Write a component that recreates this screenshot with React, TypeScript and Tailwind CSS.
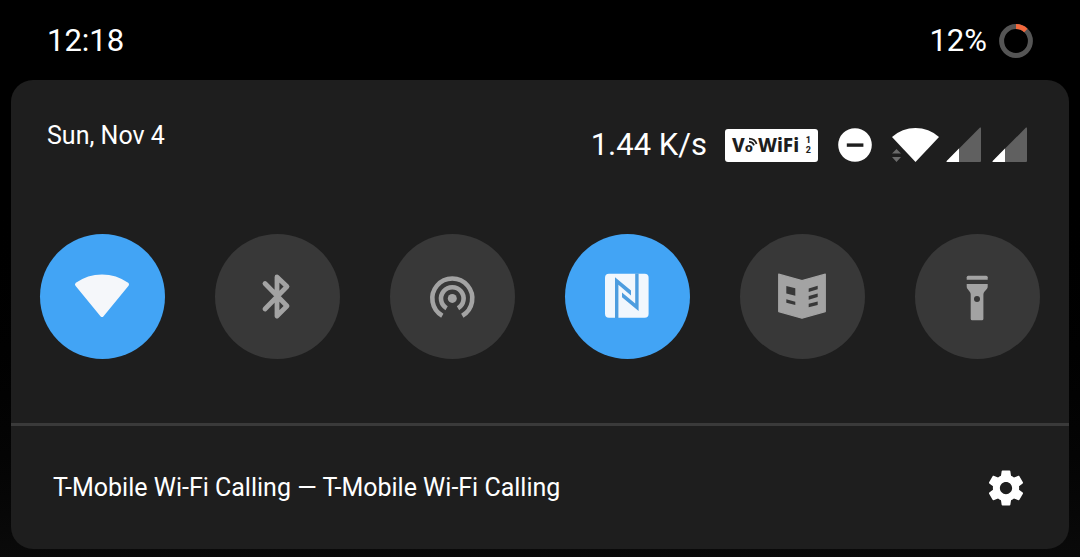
import type { ReactNode } from 'react';

const OFF = '#a3a3a3';
const CUTOUT = '#383838';

function WifiTile() {
  return (
    <svg viewBox="0 0 65 65" className="size-[65px]" aria-hidden>
      <path
        d="M7 20.5A43 43 0 0 1 57 20.5L32 51Z"
        fill="#f5f7fa"
        stroke="#f5f7fa"
        strokeWidth="4"
        strokeLinejoin="round"
      />
    </svg>
  );
}

function BluetoothTile() {
  return (
    <svg viewBox="0 0 65 65" className="size-[65px]" aria-hidden>
      <path
        d="M20 19.5L42 42L32 52V13L42 22.5L20 45"
        fill="none"
        stroke={OFF}
        strokeWidth="4.8"
        strokeLinecap="round"
        strokeLinejoin="round"
      />
    </svg>
  );
}

function HotspotTile() {
  return (
    <svg viewBox="0 0 65 65" className="size-[65px]" aria-hidden>
      <circle cx="32.3" cy="34.4" r="4.5" fill={OFF} />
      <g fill="none" stroke={OFF} strokeWidth="4.6">
        <path d="M22.3 51.8A20 20 0 1 1 42.3 51.8" />
        <path d="M26.6 44.3A11.3 11.3 0 1 1 38 44.3" />
      </g>
    </svg>
  );
}

function NfcTile() {
  return (
    <svg viewBox="0 0 65 65" className="size-[65px]" aria-hidden>
      <rect x="10" y="9.8" width="43.6" height="44" rx="4" fill="#f1f7fd" />
      <path
        d="M20 54V13.2L36 26.6V31.4L23.4 20.8V54ZM43.6 9.6V47L27 33.2V28.4L40.2 39.6V9.6Z"
        fill="#4d9ddf"
      />
    </svg>
  );
}

function ReadingTile() {
  return (
    <svg viewBox="0 0 65 65" className="size-[65px]" aria-hidden>
      <path
        d="M8.7 10.2L32 16.6L55.3 10.2V47.6L32 54.2L8.7 47.6Z"
        fill={OFF}
        stroke={OFF}
        strokeWidth="1.2"
        strokeLinejoin="round"
      />
      <g fill={CUTOUT}>
        <path d="M16.3 22L25.3 24.2V31.7L16.3 29.5Z" />
        <path d="M16.3 35.3L25.3 37.7V41L16.3 38.7Z" />
        <path d="M38.7 24.4L47.7 21.7V25.2L38.7 28Z" />
        <path d="M38.7 32.1L47.7 29.4V32.9L38.7 35.7Z" />
        <path d="M38.7 39.8L47.7 37.5V41L38.7 43.3Z" />
      </g>
    </svg>
  );
}

function FlashlightTile() {
  return (
    <svg viewBox="0 0 65 65" className="size-[65px]" aria-hidden>
      <path d="M21.7 15.7V13.2Q21.7 11.7 23.2 11.7H41.2Q42.7 11.7 42.7 13.2V15.7Z" fill={OFF} />
      <path
        d="M21.7 20H42.7V22.5Q42.7 24 41.8 25L39.4 27.8Q38.4 29 38.4 30.5V54.8Q38.4 56.3 36.9 56.3H27.2Q25.7 56.3 25.7 54.8V30.5Q25.7 29 24.7 27.8L22.6 25Q21.7 24 21.7 22.5Z"
        fill={OFF}
      />
      <circle cx="32" cy="35" r="3" fill={CUTOUT} />
    </svg>
  );
}

const tiles: { label: string; on: boolean; icon: ReactNode }[] = [
  { label: 'Wi-Fi', on: true, icon: <WifiTile /> },
  { label: 'Bluetooth', on: false, icon: <BluetoothTile /> },
  { label: 'Hotspot', on: false, icon: <HotspotTile /> },
  { label: 'NFC', on: true, icon: <NfcTile /> },
  { label: 'Reading mode', on: false, icon: <ReadingTile /> },
  { label: 'Flashlight', on: false, icon: <FlashlightTile /> },
];

function BatteryRing() {
  // pathLength 100, so the dash is the charge in percent
  return (
    <svg viewBox="0 0 34 34" className="size-[34px]" aria-hidden>
      <g fill="none" strokeWidth="5">
        <circle cx="17" cy="17" r="14.4" stroke="#555555" />
        <circle
          cx="17"
          cy="17"
          r="14.4"
          stroke="#f2683c"
          pathLength="100"
          strokeDasharray="12 88"
          transform="rotate(-90 17 17)"
        />
      </g>
    </svg>
  );
}

function VoWifiBadge() {
  return (
    <div className="flex h-[33px] w-[93px] items-center justify-between rounded-[3px] bg-white px-[7px] font-extrabold text-[#1e1e1e]">
      <div className="flex items-center font-['Noto_Sans','Open_Sans',sans-serif] text-[19px] leading-none">
        <span>V</span>
        <span className="self-end text-[13px] leading-4">o</span>
        <svg viewBox="0 0 9 16" className="-ml-1 h-4 w-[9px]" aria-hidden>
          <g fill="none" stroke="#1e1e1e" strokeWidth="1.8">
            <path d="M0 1.6Q6 1.6 7.6 7" />
            <path d="M0 4.8Q3.8 4.8 5 8.4" />
          </g>
        </svg>
        <span>WiFi</span>
      </div>
      <div className="flex flex-col font-[Roboto,sans-serif] text-[9px] leading-[10px]">
        <span>1</span>
        <span>2</span>
      </div>
    </div>
  );
}

function SignalBars() {
  return (
    <svg viewBox="0 0 35 36" className="h-9 w-[35px]" aria-hidden>
      <path d="M34 .6Q35 0 35 1.2V34Q35 35 34 35H1.2Q0 35 .7 34Z" fill="#606060" />
      <path d="M13 21.6V35H1.2Q0 35 .7 34Z" fill="#fff" />
    </svg>
  );
}

function StatusIcons() {
  return (
    <div className="flex items-center">
      <span className="mr-[18px] text-[31px] leading-9">1.44 K/s</span>
      <VoWifiBadge />
      <svg viewBox="0 0 34 34" className="ml-5 size-[34px]" aria-hidden>
        <circle cx="17" cy="17" r="16.8" fill="#fff" />
        <rect x="8.8" y="15.4" width="16.6" height="3.4" fill="#1e1e1e" />
      </svg>
      <svg viewBox="0 0 47 36" className="ml-5 h-9 w-[47px]" aria-hidden>
        <path d="M0 10A35 35 0 0 1 47 10L23.5 35Z" fill="#fff" />
        <path d="M0 26.6L4.5 22L9 26.6ZM0 30H9L4.5 35Z" fill="#6b6b6b" />
      </svg>
      <div className="ml-[7px] flex gap-[11px]">
        <SignalBars />
        <SignalBars />
      </div>
    </div>
  );
}

function GearIcon() {
  return (
    <svg viewBox="0 0 24 24" fill="currentColor" className="size-[42px]" aria-hidden>
      <path d="M19.43 12.98c.04-.32.07-.64.07-.98s-.03-.66-.07-.98l2.11-1.65c.19-.15.24-.42.12-.64l-2-3.46c-.12-.22-.39-.3-.61-.22l-2.49 1c-.52-.4-1.08-.73-1.69-.98l-.38-2.65C14.46 2.18 14.25 2 14 2h-4c-.25 0-.46.18-.49.42l-.38 2.65c-.61.25-1.17.59-1.69.98l-2.49-1c-.23-.09-.49 0-.61.22l-2 3.46c-.13.22-.07.49.12.64l2.11 1.65c-.04.32-.07.65-.07.98s.03.66.07.98l-2.11 1.65c-.19.15-.24.42-.12.64l2 3.46c.12.22.39.3.61.22l2.49-1c.52.4 1.08.73 1.69.98l.38 2.65c.03.24.24.42.49.42h4c.25 0 .46-.18.49-.42l.38-2.65c.61-.25 1.17-.59 1.69-.98l2.49 1c.23.09.49 0 .61-.22l2-3.46c.12-.22.07-.49-.12-.64l-2.11-1.65zM12 15.5c-1.93 0-3.5-1.57-3.5-3.5s1.57-3.5 3.5-3.5 3.5 1.57 3.5 3.5-1.57 3.5-3.5 3.5z" />
    </svg>
  );
}

export default function App() {
  return (
    <div className="flex min-h-screen flex-col bg-linear-to-b from-black from-30% to-[#0a0a0a] px-[11px] pb-2 font-[Roboto,sans-serif] text-white">
      {/* status bar */}
      <header className="flex h-20 items-center justify-between px-9 pt-0.5 text-[31px] leading-10">
        <time>12:18</time>
        <div className="flex items-center gap-3">
          <span>12%</span>
          <BatteryRing />
        </div>
      </header>

      <main className="flex grow flex-col rounded-[22px] bg-[#1e1e1e]">
        <div className="flex justify-between pt-[42px] pr-[42px] pl-9">
          <span className="text-[25px] leading-7">Sun, Nov 4</span>
          <div className="flex h-[46px] items-center">
            <StatusIcons />
          </div>
        </div>

        {/* quick settings */}
        <div className="flex justify-between px-[29px] pt-[66px] pb-16">
          {tiles.map(({ label, on, icon }) => (
            <button
              key={label}
              type="button"
              aria-label={label}
              aria-pressed={on}
              className={`flex size-[125px] items-center justify-center rounded-full ${
                on ? 'bg-[#42a4f5]' : 'bg-[#383838]'
              }`}
            >
              {icon}
            </button>
          ))}
        </div>

        <footer className="flex grow items-center justify-between border-t-3 border-[#3a3a3a] px-[42px]">
          <span className="text-[25px] leading-8">T-Mobile Wi-Fi Calling — T-Mobile Wi-Fi Calling</span>
          <button type="button" aria-label="Settings">
            <GearIcon />
          </button>
        </footer>
      </main>
    </div>
  );
}
